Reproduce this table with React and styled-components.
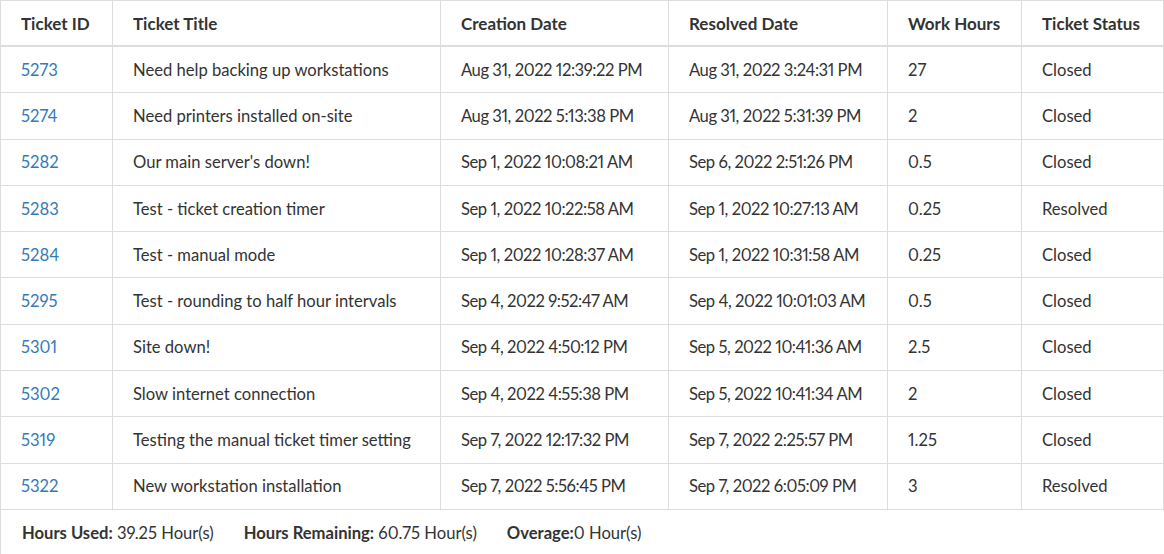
import React from "react";
import styled, { createGlobalStyle } from "styled-components";

const GlobalStyle = createGlobalStyle`
  html, body {
    margin: 0;
    padding: 0;
    background: #fff;
  }
  body {
    font-family: Lato, "Liberation Sans", sans-serif;
    font-size: 16.6px;
    color: #333;
    font-variant-numeric: proportional-nums;
  }
`;

const Wrapper = styled.div`
  width: 1164px;
`;

const Table = styled.table`
  width: 1163px;
  border-collapse: collapse;
  table-layout: fixed;
  border: 1px solid #ddd;
`;

const Th = styled.th`
  text-align: left;
  font-weight: 700;
  font-size: 17px;
  height: 44px;
  padding: 0 20px;
  border: 1px solid #ddd;
  border-bottom: 2px solid #ddd;
  color: #333;
  white-space: nowrap;
  vertical-align: middle;
`;

const Td = styled.td`
  height: 45.3px;
  padding: 0 20px;
  border: 1px solid #ddd;
  white-space: nowrap;
  vertical-align: middle;
  letter-spacing: ${(p) => (p.$numeric ? "-0.45px" : "0")};
`;

const TicketLink = styled.a`
  color: #337ab7;
  text-decoration: none;
`;

const Footer = styled.div`
  display: flex;
  align-items: center;
  gap: 30px;
  height: 44px;
  padding: 1px 21px 0;
  border-left: 1px solid #ddd;
`;

const Stat = styled.span`
  b {
    font-weight: 700;
  }
`;

const columns = [
  { label: "Ticket ID", width: 112 },
  { label: "Ticket Title", width: 328 },
  { label: "Creation Date", width: 228 },
  { label: "Resolved Date", width: 219 },
  { label: "Work Hours", width: 134 },
  { label: "Ticket Status", width: 142 },
];

const tickets = [
  ["5273", "Need help backing up workstations", "Aug 31, 2022 12:39:22 PM", "Aug 31, 2022 3:24:31 PM", "27", "Closed"],
  ["5274", "Need printers installed on-site", "Aug 31, 2022 5:13:38 PM", "Aug 31, 2022 5:31:39 PM", "2", "Closed"],
  ["5282", "Our main server's down!", "Sep 1, 2022 10:08:21 AM", "Sep 6, 2022 2:51:26 PM", "0.5", "Closed"],
  ["5283", "Test - ticket creation timer", "Sep 1, 2022 10:22:58 AM", "Sep 1, 2022 10:27:13 AM", "0.25", "Resolved"],
  ["5284", "Test - manual mode", "Sep 1, 2022 10:28:37 AM", "Sep 1, 2022 10:31:58 AM", "0.25", "Closed"],
  ["5295", "Test - rounding to half hour intervals", "Sep 4, 2022 9:52:47 AM", "Sep 4, 2022 10:01:03 AM", "0.5", "Closed"],
  ["5301", "Site down!", "Sep 4, 2022 4:50:12 PM", "Sep 5, 2022 10:41:36 AM", "2.5", "Closed"],
  ["5302", "Slow internet connection", "Sep 4, 2022 4:55:38 PM", "Sep 5, 2022 10:41:34 AM", "2", "Closed"],
  ["5319", "Testing the manual ticket timer setting", "Sep 7, 2022 12:17:32 PM", "Sep 7, 2022 2:25:57 PM", "1.25", "Closed"],
  ["5322", "New workstation installation", "Sep 7, 2022 5:56:45 PM", "Sep 7, 2022 6:05:09 PM", "3", "Resolved"],
];

const App = () => {
  return (
    <Wrapper>
      <GlobalStyle />
      <Table>
        <colgroup>
          {columns.map((c) => (
            <col key={c.label} style={{ width: c.width }} />
          ))}
        </colgroup>
        <thead>
          <tr>
            {columns.map((c) => (
              <Th key={c.label}>{c.label}</Th>
            ))}
          </tr>
        </thead>
        <tbody>
          {tickets.map(([id, title, created, resolved, hours, status]) => (
            <tr key={id}>
              <Td>
                <TicketLink href={`#${id}`}>{id}</TicketLink>
              </Td>
              <Td>{title}</Td>
              <Td $numeric>{created}</Td>
              <Td $numeric>{resolved}</Td>
              <Td>{hours}</Td>
              <Td>{status}</Td>
            </tr>
          ))}
        </tbody>
      </Table>
      <Footer>
        <Stat><b>Hours Used:</b> 39.25 Hour(s)</Stat>
        <Stat><b>Hours Remaining:</b> 60.75 Hour(s)</Stat>
        <Stat><b>Overage:</b>0 Hour(s)</Stat>
      </Footer>
    </Wrapper>
  );
};

export default App;
